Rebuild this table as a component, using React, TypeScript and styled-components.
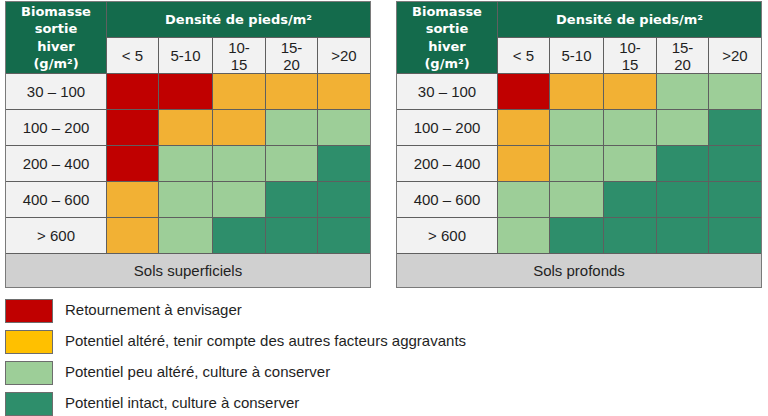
import React from 'react';
import styled, { createGlobalStyle } from 'styled-components';

const GlobalStyle = createGlobalStyle`
  body {
    margin: 0;
    background: #fff;
    font-family: 'Liberation Sans', Arial, sans-serif;
  }
`;

type Level = 'R' | 'O' | 'L' | 'D';

const colors: Record<Level, string> = {
  R: '#c00000',
  O: '#f2b134',
  L: '#9dce98',
  D: '#2e8e6b',
};

const legendColors: Record<Level, string> = {
  R: '#c00000',
  O: '#ffc000',
  L: '#9dce98',
  D: '#2e8e6b',
};

const Page = styled.div`
  padding: 1px 6px 0 5px;
  display: flex;
  flex-direction: column;
  gap: 11px;
`;

const Tables = styled.div`
  display: flex;
  gap: 25px;
`;

const Grid = styled.div`
  width: 366px;
  box-sizing: border-box;
  display: grid;
  grid-template-columns: 100px 51px 53px 52px 51px 52px;
  grid-template-rows: repeat(7, 35px) 33px;
  gap: 1px;
  background: #5f5f5f;
  border: 1px solid #7a7a7a;
`;

const HeadCell = styled.div<{ $rows?: number; $cols?: number }>`
  grid-row: span ${(p) => p.$rows ?? 1};
  grid-column: span ${(p) => p.$cols ?? 1};
  background: #146b4c;
  color: #fff;
  font-family: 'DejaVu Sans', Verdana, sans-serif;
  font-weight: 700;
  font-size: 13px;
  line-height: 17.5px;
  display: flex;
  align-items: center;
  justify-content: center;
  text-align: center;
`;

const LabelCell = styled.div`
  background: #f2f2f2;
  color: #1f1f1f;
  font-size: 15px;
  line-height: 17px;
  display: flex;
  align-items: center;
  justify-content: center;
  text-align: center;
`;

const ColorCell = styled.div<{ $level: Level }>`
  background: ${(p) => colors[p.$level]};
`;

const Footer = styled.div`
  grid-column: span 6;
  background: #d0d0d0;
  color: #1f1f1f;
  font-size: 15px;
  display: flex;
  align-items: center;
  justify-content: center;
`;

const Legend = styled.div`
  display: flex;
  flex-direction: column;
  gap: 7px;
`;

const LegendRow = styled.div`
  display: flex;
  align-items: center;
  gap: 12px;
`;

const Swatch = styled.div<{ $level: Level }>`
  width: 46px;
  height: 22px;
  background: ${(p) => legendColors[p.$level]};
  border: 1px solid #6d6d6d;
`;

const LegendText = styled.span`
  font-size: 15px;
  line-height: 17px;
  margin-top: -3px;
  color: #1f1f1f;
`;

const rowLabels = ['30 – 100', '100 – 200', '200 – 400', '400 – 600', '> 600'];
const densities: React.ReactNode[] = [
  '< 5',
  '5-10',
  <>10-<br />15</>,
  <>15-<br />20</>,
  '>20',
];

const tables: { title: string; data: Level[][] }[] = [
  {
    title: 'Sols superficiels',
    data: [
      ['R', 'R', 'O', 'O', 'O'],
      ['R', 'O', 'O', 'L', 'L'],
      ['R', 'L', 'L', 'L', 'D'],
      ['O', 'L', 'L', 'D', 'D'],
      ['O', 'L', 'D', 'D', 'D'],
    ],
  },
  {
    title: 'Sols profonds',
    data: [
      ['R', 'O', 'O', 'L', 'L'],
      ['O', 'L', 'L', 'L', 'D'],
      ['O', 'L', 'L', 'D', 'D'],
      ['L', 'L', 'D', 'D', 'D'],
      ['L', 'D', 'D', 'D', 'D'],
    ],
  },
];

const legend: { level: Level; text: string }[] = [
  { level: 'R', text: 'Retournement à envisager' },
  { level: 'O', text: 'Potentiel altéré, tenir compte des autres facteurs aggravants' },
  { level: 'L', text: 'Potentiel peu altéré, culture à conserver' },
  { level: 'D', text: 'Potentiel intact, culture à conserver' },
];

const DensityTable: React.FC<{ title: string; data: Level[][] }> = ({ title, data }) => (
  <Grid>
    <HeadCell $rows={2}>
      Biomasse<br />sortie<br />hiver<br />(g/m²)
    </HeadCell>
    <HeadCell $cols={5}>Densité de pieds/m²</HeadCell>
    {densities.map((d, i) => (
      <LabelCell key={i}>{d}</LabelCell>
    ))}
    {data.map((row, r) => (
      <React.Fragment key={r}>
        <LabelCell>{rowLabels[r]}</LabelCell>
        {row.map((lvl, c) => (
          <ColorCell key={c} $level={lvl} />
        ))}
      </React.Fragment>
    ))}
    <Footer>{title}</Footer>
  </Grid>
);

const App: React.FC = () => (
  <>
    <GlobalStyle />
    <Page>
      <Tables>
        {tables.map((t) => (
          <DensityTable key={t.title} title={t.title} data={t.data} />
        ))}
      </Tables>
      <Legend>
        {legend.map((l) => (
          <LegendRow key={l.level}>
            <Swatch $level={l.level} />
            <LegendText>{l.text}</LegendText>
          </LegendRow>
        ))}
      </Legend>
    </Page>
  </>
);

export default App;
